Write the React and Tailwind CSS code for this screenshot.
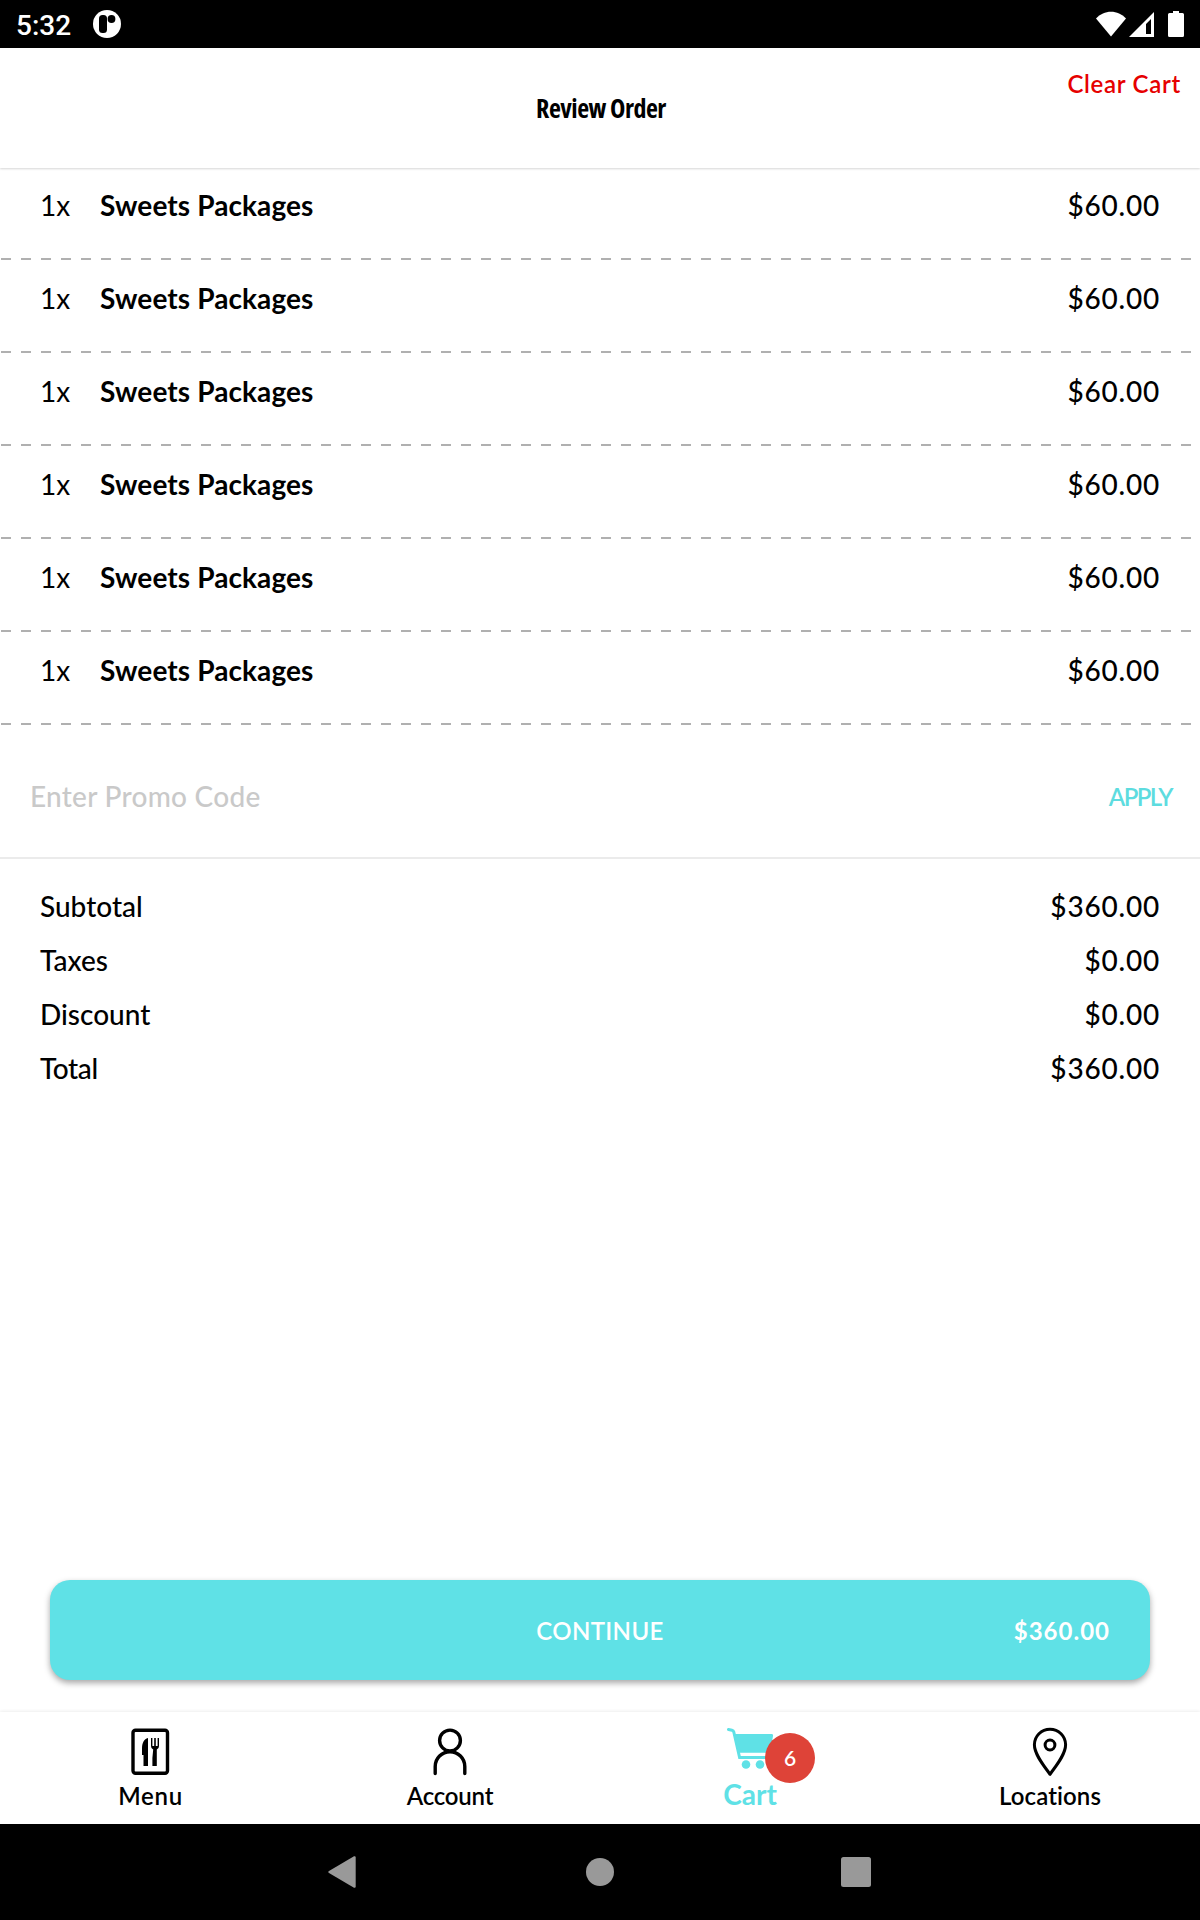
const cartItems = [
  { id: 1, quantity: 1, name: "Sweets Packages", price: 60 },
  { id: 2, quantity: 1, name: "Sweets Packages", price: 60 },
  { id: 3, quantity: 1, name: "Sweets Packages", price: 60 },
  { id: 4, quantity: 1, name: "Sweets Packages", price: 60 },
  { id: 5, quantity: 1, name: "Sweets Packages", price: 60 },
  { id: 6, quantity: 1, name: "Sweets Packages", price: 60 },
];

const formatPrice = (value) => `$${value.toFixed(2)}`;

const StatusBar = () => (
  <div className="flex h-12 items-center justify-between bg-black pl-4 pr-4 text-white">
    <div className="flex items-center">
      <span className="w-[77px] pt-[3px] font-['Roboto',sans-serif] text-[28px] font-medium leading-none">5:32</span>
      <svg className="h-7 w-7" viewBox="0 0 28 28">
        <circle cx="14" cy="14" r="14" fill="white" />
        <rect x="6" y="5" width="8" height="18" rx="3.5" fill="black" />
        <circle cx="18.5" cy="9" r="3.9" fill="black" />
      </svg>
    </div>
    <svg className="h-[26px] w-[88px]" viewBox="0 0 88 26" fill="white">
      <path d="M0 7.5C8 -1.6 22 -1.6 30 7.5L15 25.5Z" />
      <path fillRule="evenodd" d="M33 26L58 1V26ZM50 23H55V8L50 13Z" />
      <path d="M77 0H83V2H86.5A1.5 1.5 0 0 1 88 3.5V24.5A1.5 1.5 0 0 1 86.5 26H73.5A1.5 1.5 0 0 1 72 24.5V3.5A1.5 1.5 0 0 1 73.5 2H77Z" />
    </svg>
  </div>
);

const Header = () => (
  <header className="relative grid h-[120px] grid-cols-3 bg-white shadow-[0_1px_2px_rgba(0,0,0,0.16)]">
    <h1 className="col-start-2 self-center pl-0.5 text-center font-['Open_Sans',sans-serif] text-[26px] font-bold leading-9 tracking-[-0.5px] [font-stretch:75%]">
      Review Order
    </h1>
    <button className="self-start justify-self-end pr-[19px] pt-[18px] text-2xl font-semibold leading-9 tracking-[0.7px] text-[#e60000]">
      Clear Cart
    </button>
  </header>
);

const CartItem = ({ item }) => (
  <li className="flex h-[93px] flex-col justify-between">
    <div className="flex pl-10 pr-10 pt-[18px] text-[28px] leading-10">
      <span className="w-[60px]">{item.quantity}x</span>
      <span className="flex-1 font-bold tracking-[0.1px]">{item.name}</span>
      <span className="font-medium tracking-[0.8px]">{formatPrice(item.price)}</span>
    </div>
    <div className="ml-px mr-2 h-0.5 bg-[repeating-linear-gradient(90deg,#b0b0b0_0_10px,transparent_10px_20px)]" />
  </li>
);

const PromoCode = () => (
  <div className="flex h-[134px] items-center justify-between border-b-2 border-[#ebebeb] pl-[30px] pr-7 pt-2.5">
    <span className="text-[28px] font-medium leading-10 tracking-[0.27px] text-[#c9c9c9]">Enter Promo Code</span>
    <button className="pt-0.5 text-2xl font-semibold tracking-[-1.6px] text-[#5ddcdf]">APPLY</button>
  </div>
);

const Totals = ({ subtotal }) => (
  <dl className="pl-10 pr-10 pt-5 text-[28px] font-medium leading-[54px]">
    <div className="flex justify-between">
      <dt>Subtotal</dt>
      <dd className="tracking-[0.8px]">{formatPrice(subtotal)}</dd>
    </div>
    <div className="flex justify-between">
      <dt>Taxes</dt>
      <dd className="tracking-[0.8px]">{formatPrice(0)}</dd>
    </div>
    <div className="flex justify-between">
      <dt>Discount</dt>
      <dd className="tracking-[0.8px]">{formatPrice(0)}</dd>
    </div>
    <div className="flex justify-between">
      <dt className="tracking-[-0.4px]">Total</dt>
      <dd className="tracking-[0.8px]">{formatPrice(subtotal)}</dd>
    </div>
  </dl>
);

const MenuIcon = () => (
  <svg className="h-[50px] w-[50px]" viewBox="0 0 50 50">
    <rect x="8" y="3.2" width="34.5" height="43" rx="2.5" fill="none" stroke="black" strokeWidth="3.4" />
    <path d="M23 11V39H18.5V28H17V21C17 16 19 12 23 11Z" />
    <path d="M26 11H27.4V19H29.2V11H30.8V19H32.6V11H34V19Q34 22 31.8 22.5V39H27.4V31L28.2 22.5Q26 22 26 19Z" />
  </svg>
);

const AccountIcon = () => (
  <svg className="h-[50px] w-[50px]" viewBox="0 0 50 50" fill="none" stroke="black" strokeWidth="3.4" strokeLinecap="round">
    <circle cx="25" cy="13.5" r="10.4" />
    <path d="M10.2 46.5V39.5A14.8 14.8 0 0 1 39.8 39.5V46.5" />
  </svg>
);

const CartIcon = () => (
  <svg className="h-[50px] w-[50px]" viewBox="0 0 50 50" fill="#5fe1e6">
    <path d="M3.5 2.5L7 3.2Q8.4 3.5 8.8 5L14.6 30.5H46" fill="none" stroke="#5fe1e6" strokeWidth="3" strokeLinecap="round" />
    <path d="M8.5 7H46.5Q48.5 7 48 9L45 25.8H13Z" />
    <circle cx="21" cy="37.5" r="4.3" />
    <circle cx="35" cy="37.5" r="4.3" />
  </svg>
);

const LocationIcon = () => (
  <svg className="h-[50px] w-[50px]" viewBox="0 0 50 50" fill="none" stroke="black" strokeWidth="3">
    <path d="M25 47.3C20 40 9.4 28 9.4 17.8A15.6 15.6 0 0 1 40.6 17.8C40.6 28 30 40 25 47.3Z" strokeLinejoin="round" />
    <circle cx="25" cy="18" r="4.9" />
  </svg>
);

const Tab = ({ icon, badge, children }) => (
  <button className="flex flex-col items-center pt-[15px]">
    <span className="relative">
      {icon}
      {badge && (
        <span className="absolute left-[40px] top-[6px] flex h-[50px] w-[50px] items-center justify-center rounded-full bg-[#de4338] text-[21px] font-semibold text-white">
          {badge}
        </span>
      )}
    </span>
    {children}
  </button>
);

const TabBar = ({ count }) => (
  <nav className="grid h-28 grid-cols-4 bg-white text-2xl font-semibold leading-9 shadow-[0_-1px_3px_rgba(0,0,0,0.07)]">
    <Tab icon={<MenuIcon />}>
      <span className="mt-px pl-px tracking-[0.7px]">Menu</span>
    </Tab>
    <Tab icon={<AccountIcon />}>
      <span className="mt-px tracking-[-0.2px]">Account</span>
    </Tab>
    <Tab icon={<CartIcon />} badge={count}>
      <span className="-mt-px text-[28px] font-bold leading-9 text-[#5fe1e6]">Cart</span>
    </Tab>
    <Tab icon={<LocationIcon />}>
      <span className="mt-px tracking-[0.1px]">Locations</span>
    </Tab>
  </nav>
);

const SystemNav = () => (
  <div className="flex h-24 items-center justify-center gap-56 bg-black">
    <svg className="h-8 w-8" viewBox="0 0 32 32" fill="#999">
      <path d="M1 15Q-0.5 16 1 17L26 31.7Q27.7 32.3 27.7 30.5V1.5Q27.7 -0.3 26 0.3Z" />
    </svg>
    <svg className="h-8 w-8" viewBox="0 0 32 32" fill="#999">
      <circle cx="16" cy="16" r="14" />
    </svg>
    <svg className="h-8 w-8" viewBox="0 0 32 32" fill="#999">
      <rect x="1" y="1" width="30" height="30" rx="2.5" />
    </svg>
  </div>
);

export default function App() {
  const subtotal = cartItems.reduce((sum, item) => sum + item.price * item.quantity, 0);

  return (
    <div className="flex h-[1920px] w-[1200px] flex-col overflow-hidden bg-white font-['Lato',sans-serif] text-black">
      <StatusBar />
      <Header />
      <main className="-mt-px flex flex-1 flex-col">
        <ul>
          {cartItems.map((item) => (
            <CartItem key={item.id} item={item} />
          ))}
        </ul>
        <PromoCode />
        <Totals subtotal={subtotal} />
        <button className="mx-[50px] mb-8 mt-auto grid h-[100px] grid-cols-3 items-center rounded-[20px] bg-[#5fe1e6] pt-0.5 text-2xl text-white shadow-[0_3px_6px_rgba(0,0,0,0.35)]">
          <span className="col-start-2 font-semibold tracking-[0.35px]">CONTINUE</span>
          <span className="justify-self-end pr-10 font-bold tracking-[1px]">{formatPrice(subtotal)}</span>
        </button>
      </main>
      <TabBar count={cartItems.length} />
      <SystemNav />
    </div>
  );
}
